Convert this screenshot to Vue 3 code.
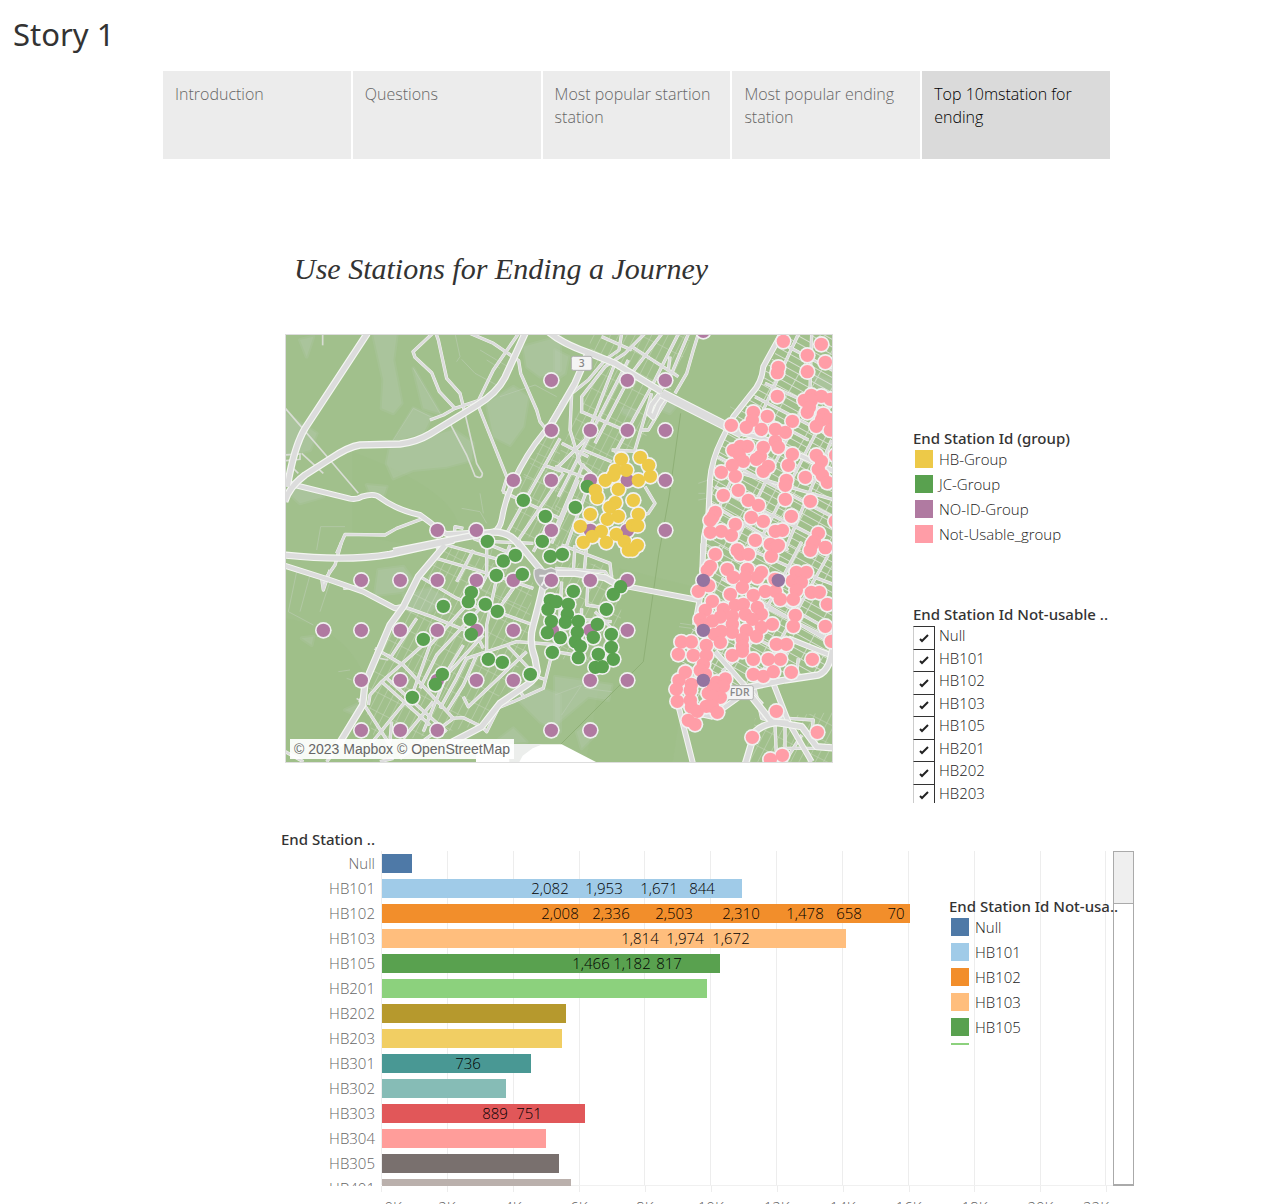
<script setup>
const tabs = [
  'Introduction',
  'Questions',
  'Most popular startion station',
  'Most popular ending station',
  'Top 10mstation for ending',
]

const groups = [
  { name: 'HB-Group', color: '#edc948' },
  { name: 'JC-Group', color: '#59a14f' },
  { name: 'NO-ID-Group', color: '#b07aa1' },
  { name: 'Not-Usable_group', color: '#ff9da7' },
]

const filterIds = ['Null', 'HB101', 'HB102', 'HB103', 'HB105', 'HB201', 'HB202', 'HB203']

// Bar lengths and label centres, in units of the plot's full span
const SPAN = 731
const pct = (n) => (n / SPAN) * 100 + '%'
const bars = [
  { id: 'Null', len: 30, color: '#4e79a7', marks: [] },
  { id: 'HB101', len: 360, color: '#a0cbe8', marks: [['2,082', 168], ['1,953', 222], ['1,671', 277], ['844', 320]] },
  { id: 'HB102', len: 528, color: '#f28e2b', marks: [['2,008', 178], ['2,336', 229], ['2,503', 292], ['2,310', 359], ['1,478', 423], ['658', 467], ['70', 514]] },
  { id: 'HB103', len: 464, color: '#ffbe7d', marks: [['1,814', 258], ['1,974', 303], ['1,672', 349]] },
  { id: 'HB105', len: 338, color: '#59a14f', marks: [['1,466', 209], ['1,182', 250], ['817', 287]] },
  { id: 'HB201', len: 325, color: '#8cd17d', marks: [] },
  { id: 'HB202', len: 184, color: '#b6992d', marks: [] },
  { id: 'HB203', len: 180, color: '#f1ce63', marks: [] },
  { id: 'HB301', len: 149, color: '#499894', marks: [['736', 86]] },
  { id: 'HB302', len: 124, color: '#86bcb6', marks: [] },
  { id: 'HB303', len: 203, color: '#e15759', marks: [['889', 113], ['751', 147]] },
  { id: 'HB304', len: 164, color: '#ff9d9a', marks: [] },
  { id: 'HB305', len: 177, color: '#79706e', marks: [] },
  { id: 'HB401', len: 189, color: '#bab0ac', marks: [] },
]
const ticks = Array.from({ length: 12 }, (_, i) => ({
  at: i * 65.85,
  text: i * 2 + 'K',
  label: i === 0 ? 12 : i === 11 ? 714 : i * 65.85,
}))
const chartLegend = bars.slice(0, 6)

// Map tiles: each has its own origin, with roads and streets in tile units
const tiles = [
  {
    x: -18, y: -15,
    parks: [
      'M280 15 L350 15 L340 90 L365 220 L340 250 L305 235 L310 150 Z',
      'M330 350 L520 300 L580 340 L575 390 L500 410 L400 420 L340 445 L320 400 Z',
      'M400 235 L455 260 L430 310 L340 335 Z',
      'M400 115 L480 250 L430 235 Z',
      'M620 220 L700 170 L745 200 L730 290 L690 345 L640 320 Z',
      'M730 50 L840 20 L840 120 L780 140 L740 110 Z',
      'M16 250 L110 310 L90 360 L16 380 Z',
      'M60 30 L100 20 L80 80 Z',
      'M16 480 L80 470 L130 500 L60 520 Z',
      'M260 465 L320 470 L310 500 L270 490 Z',
    ],
    major: [
      'M262 10 L75 295 Q42 350 22 470',
      'M14 515 Q28 470 75 435 L150 387 Q205 350 240 345 L360 342 Q410 336 450 312 L590 226 Q650 190 675 142 L737 6',
      'M340 664 L550 622 L640 606 Q700 606 725 660',
    ],
    medium: [
      'M16 458 L210 506 Q230 510 245 500 Q285 488 300 503 Q350 540 420 555 Q450 575 480 603 L500 612 L640 606',
      'M850 215 Q830 262 790 310 Q740 370 700 455 Q675 510 666 565 Q660 598 640 606',
    ],
    minor: [
      'M458 10 L399 65 L405 82 L455 128 L478 185 L525 235',
      'M468 10 L475 30 L500 145 L540 190 L555 250',
      'M570 10 L640 40 L716 92 L722 130 L770 240 L780 275 L800 300',
      'M716 10 L640 120 L595 212 L525 235 L490 255 L450 270',
      'M595 228 L682 445', 'M170 670 L195 613 L315 615 L350 595 L430 565',
      'M668 485 L710 505 L850 570', 'M840 325 L680 610', 'M850 430 L715 630',
      'M680 445 L668 485', 'M520 640 L525 590 L550 595', 'M470 660 L500 630',
      'M580 625 L680 665', 'M790 405 L850 425', 'M640 635 L760 640', 'M800 590 L760 665',
    ],
    lane: [
      'M555 250 L590 400 L607 430 Q607 450 585 438 L560 375 L510 280',
      'M16 235 L150 390 L235 490', 'M128 10 L128 46',
      'M16 375 L60 372 L60 388 L16 392', 'M65 370 L130 430', 'M30 405 L55 430',
    ],
    thin: [
      'M400 115 L480 250',
      'M340 330 L400 235 L455 262', 'M525 10 L540 80 L530 95', 'M545 88 L585 130 L650 165',
      'M660 200 L765 165 L830 200', 'M600 60 L700 120 M620 90 L660 115',
      'M110 660 L122 590 L195 590', 'M545 535 L600 545 L620 580', 'M600 490 L610 550',
      'M730 440 L840 480 M750 400 L840 445 M770 370 L840 400',
    ],
    blocks: ['M840 225 L740 400 L690 600 L840 660 Z'],
    blocksW: [],
  },
  {
    x: 807, y: -15,
    parks: [
      'M200 235 L245 240 L235 265 L205 250 Z', 'M330 215 L370 220 L345 250 L320 240 Z',
      'M770 130 L834 150 L834 200 L790 175 Z', 'M0 60 L40 80 L30 130 L0 150 Z',
    ],
    major: [
      'M-20 5 Q20 40 100 68 L180 100 L320 185',
      'M100 68 L60 160 L-10 280',
    ],
    bridge: ['M320 190 L560 312'],
    medium: [
      'M680 10 L625 110 Q620 160 590 190 L535 260 L500 330 Q470 390 465 450 L460 560 L447 620 L445 670',
      'M540 305 L625 325 L850 430', 'M320 185 L290 225 L282 250 L295 262 L310 225 L335 190',
    ],
    minor: [
      'M200 10 L192 60 L150 90 L100 150 L50 190 L45 300 L75 400 L110 430',
      'M270 10 L210 70 L150 110 L80 200 L80 250', 'M400 12 L350 130 L310 190',
      'M430 12 L415 60 L395 130 L360 190', 'M320 12 L230 130 L120 340', 'M370 12 L300 150 L180 370',
      'M180 100 L90 330 L0 420', 'M220 90 L10 500', 'M230 50 L370 140', 'M140 20 L230 60',
      'M345 80 L340 120', 'M290 190 L240 360', 'M255 300 L280 300 L340 200', 'M80 245 L230 310',
      'M85 360 L170 395', 'M170 360 L260 365', 'M0 410 L110 450', 'M110 440 L30 660', 'M85 400 L0 600',
      'M70 450 L-10 640', 'M270 470 L300 520 L280 550 L250 560', 'M20 340 L100 380',
      'M770 12 L765 180', 'M700 50 L850 130', 'M630 160 L850 260', 'M600 200 L850 330', 'M590 240 L760 330',
      'M730 12 L560 380 L480 560', 'M840 200 L600 660', 'M830 330 L690 660', 'M760 200 L540 640',
      'M490 380 L850 570', 'M480 470 L840 650', 'M465 520 L700 660', 'M560 430 L840 510',
    ],
    lane: [], thin: ['M430 460 L460 450 M430 490 L450 490 M430 510 L455 505', 'M525 230 L560 250'],
    blocks: ['M100 15 L410 15 L340 200 L250 360 L180 380 L80 660 L0 660 L0 400 L120 130 Z'],
    blocksW: ['M690 15 L840 15 L840 665 L447 665 L465 450 L500 330 L590 200 Z'],
  },
  {
    x: -18, y: 630,
    parks: [
      'M295 75 L370 65 L395 100 L370 140 L285 150 Z', 'M370 150 L450 130 L500 160 L450 200 L390 200 Z',
      'M690 440 L760 420 L840 450 L840 560 L780 530 Z', 'M65 280 L100 275 L95 300 Z',
      'M700 550 L740 590 L640 600 L660 580 Z', 'M195 495 L240 475 L230 510 Z',
    ],
    major: [
      'M14 30 Q200 50 330 28 L520 -14',
      'M495 0 L415 95 L370 185 L330 240 L255 415 L248 480 L175 600',
      'M712 -10 L795 90 Q790 130 760 240 Q745 290 765 340 L772 380 Q770 400 740 420 L660 475 L605 545 L500 600',
    ],
    medium: ['M14 62 L150 105 L250 140 L345 190 L370 185'],
    minor: [
      'M185 -10 L165 60 L130 110', 'M125 100 L130 135 L150 75', 'M190 130 L240 125',
      'M370 185 L455 215 L590 270 L610 310', 'M420 95 L530 160 L620 200', 'M470 40 L640 90 L760 130',
      'M580 15 L530 110', 'M620 -10 L620 90 L600 130', 'M500 0 L680 50', 'M690 0 L650 100 L620 240 L620 320',
      'M560 180 L450 300 L400 440 L270 600', 'M600 190 L470 330 L420 430', 'M285 310 L370 360 L520 520',
      'M410 220 L330 340', 'M440 290 L305 410 L270 450 L265 480', 'M240 460 L330 600',
      'M305 410 L450 540', 'M460 470 L370 580', 'M320 400 L500 560', 'M520 520 L360 640',
      'M700 130 L650 200 L760 240', 'M720 100 L670 170', 'M840 300 L710 290 L560 340 L530 400 L480 490',
      'M590 330 L550 420 L500 500', 'M550 455 L565 485 L740 320', 'M680 300 L770 395 L800 405',
      'M820 310 L790 430 L700 470 L650 490', 'M610 270 L500 390 L430 560', 'M550 300 L470 430',
      'M510 520 L550 518 L605 545', 'M720 440 L735 460', 'M140 650 L160 625', 'M655 490 L620 560 L605 545',
      'M335 530 L330 590', 'M16 620 L70 650', 'M300 650 L340 640',
    ],
    lane: ['M285 320 L330 330 M295 300 L280 340 M300 340 L325 345', 'M230 460 L250 475 M235 470 L260 460'],
    thin: [
      'M50 80 L25 200 L100 240 M90 90 L60 200 M150 110 L120 200', 'M175 380 L210 375 M200 400 L215 405',
      'M620 60 L680 80 M640 0 L620 70', 'M600 130 L740 190',
    ],
    blocks: ['M500 0 L760 100 L740 330 L600 540 L290 600 L250 480 L300 320 L400 130 Z'],
    blocksW: [],
  },
  {
    x: 807, y: 630,
    parks: [
      'M0 395 L170 420 L160 465 L100 455 L0 540 Z', 'M65 560 L100 535 L120 570 L80 610 Z',
    ],
    major: [
      'M-20 85 L60 85 L150 98 L190 120',
      'M470 400 L540 435 L690 405 L790 390 Q830 375 834 290', 'M590 455 L650 530 L740 545 L785 605 L850 610',
      'M570 660 L600 560 Q640 525 700 535',
    ],
    bridge: [],
    medium: [
      'M220 125 L430 165', 'M445 -5 L440 130 L420 240', 'M372 490 L415 660', 'M400 500 L470 515 L560 450',
      'M655 415 L700 530 L770 650', 'M700 280 L850 340', 'M480 320 L620 480',
    ],
    minor: [
      'M0 70 L150 80 L170 110', 'M60 0 L55 80 M95 0 L85 110 M20 0 L165 55 L170 100', 'M100 90 L95 180 L160 190',
      'M20 110 L10 300', 'M80 190 L75 330', 'M120 200 L180 260', 'M0 320 L60 330', 'M40 220 L170 230',
      'M840 120 L760 90 L600 20', 'M740 -10 L560 330', 'M820 30 L600 420', 'M690 180 L850 270',
      'M640 190 L820 280', 'M500 100 L840 300', 'M450 200 L700 330', 'M600 280 L560 330 L500 380',
      'M730 340 L725 380', 'M600 430 L620 520 L690 540', 'M660 540 L665 650', 'M690 540 L690 650',
      'M700 520 L775 525 L770 560', 'M620 510 L700 520', 'M690 610 L800 610', 'M740 570 L690 650',
    ],
    lane: [], thin: ['M0 450 L80 420 L20 510 M90 430 L170 440', 'M375 235 L410 240 M372 245 L410 250'],
    blocks: ['M0 50 L170 60 L200 200 L180 360 L0 340 Z', 'M600 520 L850 500 L850 660 L580 660 Z'],
    blocksW: ['M447 0 L850 0 L850 300 L800 380 L540 430 L470 520 L370 490 L360 400 L430 200 Z'],
  },
]

// Station marks in the same four tiles, [x, y] per mark
const stations = [
  { color: '#b07aa1', at: [
    [[814, 151], [814, 301], [700, 451], [814, 451], [472, 601], [589, 601], [814, 601]],
    [[445, 4], [217, 151], [331, 151], [106, 301], [217, 301], [331, 301], [106, 451], [217, 451], [331, 451], [106, 601], [217, 601], [331, 601]],
    [[244, 106], [361, 106], [472, 106], [589, 106], [700, 106], [814, 106], [130, 256], [244, 256], [361, 256], [472, 256], [589, 256], [700, 256], [817, 256],
      [244, 406], [361, 406], [472, 406], [589, 406], [700, 406], [244, 556], [361, 556], [472, 556], [814, 556]],
    [[106, 106], [217, 106], [106, 256], [217, 256], [106, 406], [217, 406], [106, 556]],
  ] },
  { color: '#59a14f', at: [
    [[730, 511], [796, 559], [787, 634], [622, 634]],
    [[97, 469], [61, 532]],
    [[670, 48], [706, 31], [649, 91], [727, 88], [811, 34], [574, 142], [565, 170], [616, 178], [652, 199], [490, 184], [571, 223], [574, 268], [430, 283],
      [625, 343], [667, 352], [751, 388], [487, 388], [466, 418], [397, 457], [811, 166], [804, 193], [814, 229], [802, 263], [817, 322]],
    [[22, 28], [197, 125], [175, 148], [55, 139], [154, 193], [4, 170], [40, 178], [37, 208], [31, 232], [70, 229], [127, 238], [67, 262], [16, 278],
      [115, 277], [169, 268], [61, 290], [76, 304], [70, 338], [169, 307], [130, 328], [175, 343], [121, 367], [142, 365]],
  ] },
  { color: '#edc948', at: [
    [],
    [[199, 388], [256, 382], [281, 406], [286, 439], [214, 421], [182, 421], [176, 436], [151, 451], [250, 451], [190, 478], [121, 481], [127, 503],
      [235, 511], [181, 518], [165, 532], [106, 553], [190, 559], [157, 568], [250, 553], [76, 589], [232, 586], [248, 587], [139, 604], [184, 613],
      [112, 619], [85, 637], [154, 637], [208, 634], [220, 660], [247, 646], [232, 660]],
    [],
    [],
  ] },
  { color: '#ff9da7', at: [
    [],
    [[685, 34], [799, 43], [757, 76], [811, 97], [757, 125], [670, 112], [667, 128], [667, 199], [769, 196], [748, 211], [799, 199], [826, 208], [769, 211],
      [757, 247], [763, 232], [595, 247], [592, 271], [637, 259], [574, 292], [712, 274], [529, 286], [619, 298], [661, 298], [691, 307], [805, 253],
      [784, 289], [799, 270], [822, 268], [826, 300], [661, 334], [670, 352], [625, 352], [577, 349], [556, 349], [535, 361], [553, 375], [565, 394],
      [616, 379], [604, 388], [712, 373], [640, 409], [625, 424], [700, 406], [784, 376], [799, 394], [790, 418], [802, 436], [817, 457], [532, 406],
      [541, 439], [499, 427], [751, 442], [694, 451], [691, 466], [550, 481], [505, 496], [580, 511], [610, 526], [691, 508], [766, 514], [481, 547],
      [474, 560], [466, 571], [466, 607], [499, 604], [529, 616], [541, 583], [589, 562], [625, 574], [709, 559], [661, 604], [682, 601], [790, 610],
      [778, 634], [772, 643], [811, 652], [601, 631], [646, 643], [670, 646], [547, 660], [841, 574], [842, 376]],
    [],
    [[481, 28], [466, 64], [457, 76], [547, 16], [556, 28], [580, 28], [649, 34], [667, 4], [766, 16], [811, 8], [517, 73], [535, 97], [577, 73],
      [571, 97], [619, 82], [607, 97], [660, 103], [562, 127], [461, 122], [430, 139], [526, 148], [595, 151], [631, 139], [661, 139], [676, 163],
      [724, 82], [754, 82], [712, 108], [739, 112], [724, 136], [715, 163], [769, 142], [793, 142], [817, 178], [472, 169], [451, 196], [505, 193],
      [541, 181], [565, 178], [607, 187], [619, 208], [496, 216], [436, 223], [532, 214], [571, 208], [592, 223], [472, 228], [532, 238], [721, 211],
      [715, 244], [811, 244], [652, 238], [619, 247], [604, 274], [574, 256], [532, 262], [499, 259], [478, 268], [496, 292], [562, 283], [562, 304],
      [562, 319], [532, 331], [445, 241], [379, 291], [409, 291], [370, 328], [415, 331], [454, 301], [454, 331], [445, 358], [436, 376], [391, 382],
      [372, 406], [364, 433], [367, 469], [409, 418], [406, 436], [406, 466], [409, 486], [427, 499], [451, 388], [484, 412], [511, 402], [505, 424],
      [460, 445], [475, 430], [496, 457], [472, 454], [454, 484], [472, 484], [487, 502], [400, 526], [420, 538], [595, 343], [640, 343], [676, 343],
      [772, 343], [664, 298], [694, 298], [595, 388], [625, 394], [655, 380], [709, 382], [664, 499], [787, 562], [592, 577], [646, 643], [682, 631],
      [829, 289]],
  ] },
  { color: '#9474a0', at: [[], [], [], [[445, 106], [670, 106], [445, 256], [445, 406]]] },
]
const marks = stations.flatMap((s) =>
  s.at.flatMap((list, t) => list.map(([x, y]) => ({ x: x + tiles[t].x, y: y + tiles[t].y, color: s.color })))
)
const streetKinds = ['minor', 'medium', 'major', 'bridge']
</script>

<template>
  <main class="story">
    <h1>Story 1</h1>
    <nav class="tabs" aria-label="Story points">
      <button v-for="(t, i) in tabs" :key="t" type="button" :class="{ active: i === 4 }">{{ t }}</button>
    </nav>

    <section class="board">
      <h2>Use Stations for Ending a Journey</h2>

      <div class="upper">
        <div class="map">
          <svg viewBox="0 0 1638 1281" role="img" aria-label="Map of end stations">
            <defs>
              <pattern id="blocksNj" width="22" height="52" patternUnits="userSpaceOnUse" patternTransform="rotate(27)">
                <path d="M0 0H22M0 0V52" class="grid-line" />
              </pattern>
              <pattern id="blocksNy" width="54" height="20" patternUnits="userSpaceOnUse" patternTransform="rotate(29)">
                <path d="M0 0H54M0 0V20" class="grid-line strong" />
              </pattern>
            </defs>
            <rect width="1638" height="1281" fill="#a1c08c" />
            <path d="M0 850 Q300 900 260 1281 H0Z M200 350 Q600 500 500 650 L200 600Z M1000 700 L1240 760 L1160 1281 H900Z" fill="#9cbd86" opacity="0.3" />
            <g v-for="(t, i) in tiles" :key="'a' + i" :transform="`translate(${t.x} ${t.y})`">
              <path v-for="d in t.parks" :key="d" :d="d" class="park" />
              <path v-for="d in t.blocks" :key="d" :d="d" fill="url(#blocksNj)" />
              <path v-for="d in t.blocksW" :key="d" :d="d" fill="url(#blocksNy)" />
              <path v-for="d in t.thin" :key="d" :d="d" class="thin" />
              <path v-for="d in t.lane" :key="d" :d="d" class="lane" />
            </g>
            <path d="M1184 235 L1150 480 L1118 660 L1072 980 L822 1230" class="border-line" />
            <template v-for="k in streetKinds" :key="k">
              <g v-for="(t, i) in tiles" :key="'c' + i" :transform="`translate(${t.x} ${t.y})`">
                <path v-for="d in t[k]" :key="d" :d="d" :class="['road', 'casing', k]" />
              </g>
              <g v-for="(t, i) in tiles" :key="'r' + i" :transform="`translate(${t.x} ${t.y})`">
                <path v-for="d in t[k]" :key="d" :d="d" :class="['road', k]" />
              </g>
            </template>
            <path d="M570 1228 H827 L930 1281 H570Z" fill="#fff" />
            <path d="M670 1228 H770 L740 1240 L710 1262 L700 1281 H670Z" fill="#eceeec" />
            <g class="shield">
              <rect x="856" y="64" width="62" height="42" rx="6" />
              <text x="887" y="97">3</text>
              <rect x="1321" y="1052" width="81" height="42" rx="6" />
              <text x="1361" y="1084">FDR</text>
            </g>
            <path d="M745 704 L760 698 L777 704 L795 698 L810 704 Q818 740 777 766 Q738 740 745 704Z" fill="#b5b5b5" stroke="#e6e6e6" stroke-width="4" />
            <path d="M760 722 H784 L766 752" fill="none" stroke="#eee" stroke-width="6" />
            <circle v-for="(m, i) in marks" :key="'h' + i" :cx="m.x" :cy="m.y" r="25" fill="#f0f0f0" />
            <circle v-for="(m, i) in marks" :key="'m' + i" :cx="m.x" :cy="m.y" r="20" :fill="m.color" />
          </svg>
          <p class="credit">© 2023 Mapbox © OpenStreetMap</p>
        </div>

        <aside class="side">
          <h3>End Station Id (group)</h3>
          <ul class="legend">
            <li v-for="g in groups" :key="g.name"><i :style="{ background: g.color }"></i>{{ g.name }}</li>
          </ul>
          <h3 class="second">End Station Id Not-usable ..</h3>
          <div class="filter">
            <div class="options">
              <label v-for="id in filterIds" :key="id">
                <span class="tick">
                  <input type="checkbox" checked />
                  <svg viewBox="0 0 10 10" aria-hidden="true"><path d="M1 6 L3 8 L5 6 L9 2" /></svg>
                </span>
                {{ id }}
              </label>
            </div>
          </div>
        </aside>
      </div>

      <div class="chart">
        <h3>End Station ..</h3>
        <div class="body">
          <div class="names">
            <span v-for="b in bars" :key="b.id">{{ b.id }}</span>
          </div>
          <div class="plot">
            <i v-for="t in ticks" :key="t.text" class="rule" :style="{ left: pct(t.at) }"></i>
            <div v-for="b in bars" :key="b.id" class="row">
              <div class="bar" :style="{ width: pct(b.len), background: b.color }"></div>
              <span v-for="m in b.marks" :key="m[0]" :style="{ left: pct(m[1]) }">{{ m[0] }}</span>
            </div>
          </div>
          <div class="scroll"><div class="thumb"></div></div>
          <div class="bar-legend">
            <h3>End Station Id Not-usa..</h3>
            <ul class="legend">
              <li v-for="b in chartLegend" :key="b.id"><i :style="{ background: b.color }"></i>{{ b.id }}</li>
            </ul>
          </div>
        </div>
        <div class="axis">
          <template v-for="t in ticks" :key="t.text">
            <i class="rule" :style="{ left: pct(t.at) }"></i>
            <span :style="{ left: pct(t.label) }">{{ t.text }}</span>
          </template>
        </div>
      </div>
    </section>
  </main>
</template>

<style>
body {
  margin: 0;
  background: #fff;
}
</style>

<style scoped>
* {
  box-sizing: border-box;
}
.story {
  font-family: "Open Sans", "Noto Sans", sans-serif;
  font-weight: 300;
  font-size: 15px;
  color: #222;
}
h1, h2, h3, p, ul {
  margin: 0;
  padding: 0;
}
h1 {
  padding: 12px 13px 15px;
  font-family: "Noto Sans", sans-serif;
  font-size: 31px;
  line-height: 44px;
  font-weight: 400;
  color: #333;
}
.tabs {
  display: grid;
  grid-template-columns: repeat(5, 1fr);
  gap: 2px;
  height: 88px;
  margin: 0 159px 0 163px;
}
.tabs button {
  display: flex;
  align-items: flex-start;
  border: 0;
  padding: 12px;
  background: #ececec;
  color: #666;
  font: inherit;
  font-size: 16px;
  line-height: 23px;
  text-align: left;
}
.tabs .active {
  background: #dadada;
  color: #000;
}
.board {
  margin: 0 135px 0 281px;
}
h2 {
  padding: 90px 13px 45px;
  font: italic 400 30px/40px "Liberation Serif", serif;
  color: #333;
}
.upper {
  display: flex;
  gap: 80px;
  padding-left: 4px;
}
.map {
  position: relative;
  flex: 1;
  align-self: flex-start;
  border: 1px solid #ddd;
}
.map svg {
  display: block;
  width: 100%;
}
.credit {
  position: absolute;
  left: 4px;
  bottom: 3px;
  padding: 0 4px;
  background: rgba(255, 255, 255, 0.93);
  font: 400 14px/20px "Liberation Sans", sans-serif;
  color: #666;
}
.park { fill: #b9ccb4; opacity: 0.4; stroke: #b9ccb4; stroke-width: 12; stroke-linejoin: round; stroke-opacity: 0.5; }
.grid-line { fill: none; stroke: #d9e0d3; stroke-width: 3; opacity: 0.65; }
.grid-line.strong { stroke: #e2e5df; stroke-width: 5; opacity: 0.85; }
.thin { fill: none; stroke: #b9ccb0; stroke-width: 2; }
.lane { fill: none; stroke: #d8ddd4; stroke-width: 5; }
.border-line { fill: none; stroke: #8fb077; stroke-width: 3; }
.road { fill: none; stroke: #dcdcdc; stroke-linejoin: round; }
.minor { stroke-width: 7; }
.medium { stroke-width: 12; }
.major { stroke-width: 15; }
.bridge { stroke-width: 23; }
.casing { stroke: #f4f6f2; }
.casing.minor { stroke-width: 10; }
.casing.medium { stroke-width: 18; }
.casing.major { stroke-width: 22; }
.casing.bridge { stroke-width: 29; }
.shield rect { fill: #f4f4f4; stroke: #b0b0b0; stroke-width: 3; }
.shield text { font: 600 31px "Open Sans", sans-serif; fill: #888; text-anchor: middle; }
h3 {
  font-family: "Noto Sans", sans-serif;
  font-size: 15px;
  line-height: 24px;
  font-weight: 500;
  color: #333;
  white-space: nowrap;
}
.side {
  width: 221px;
  padding-top: 92px;
}
.legend {
  list-style: none;
}
.legend li {
  display: flex;
  gap: 6px;
  height: 25px;
  padding-left: 2px;
  line-height: 18px;
}
.legend i {
  width: 18px;
  height: 18px;
}
.second {
  margin-top: 52px;
}
.filter {
  height: 177px;
  overflow: hidden;
}
.options {
  display: grid;
  grid-template-rows: repeat(8, 1fr);
  height: 180px;
}
.filter label {
  display: flex;
  gap: 4px;
  line-height: 18px;
}
.tick {
  display: grid;
  place-items: center;
  width: 22px;
  border: 1px solid #333;
  border-width: 1px 1px 0;
  border-left-color: #ccc;
}
.tick input, .tick svg {
  grid-area: 1 / 1;
}
.tick input {
  appearance: none;
  width: 20px;
  height: 20px;
  margin: 0;
}
.tick svg {
  width: 10px;
  height: 10px;
}
.tick path {
  fill: none;
  stroke: #222;
  stroke-width: 2;
}
.chart {
  padding-top: 24px;
}
.body {
  position: relative;
  display: flex;
  height: 335px;
  overflow: hidden;
}
.names {
  width: 101px;
  padding-right: 7px;
  text-align: right;
  color: #666;
}
.names span {
  display: block;
  line-height: 25px;
}
.plot {
  position: relative;
  flex: 1;
  border-bottom: 1px solid #f0f0f0;
}
.rule {
  position: absolute;
  top: 0;
  bottom: 0;
  width: 1px;
  margin-left: -1px;
  background: #ededed;
}
.row {
  position: relative;
  height: 25px;
  padding-top: 3px;
}
.bar {
  height: 19px;
}
.row span {
  position: absolute;
  top: 0;
  line-height: 25px;
  transform: translateX(-50%);
  color: #000;
}
.scroll {
  width: 21px;
  border: 1px solid #aaa;
  border-bottom-width: 2px;
}
.thumb {
  height: 52px;
  background: #efefef;
  border-bottom: 1px solid #aaa;
}
.bar-legend {
  position: absolute;
  right: 0;
  top: 43px;
  width: 185px;
  height: 151px;
  overflow: hidden;
}
.axis {
  position: relative;
  height: 19px;
  margin: 0 21px 0 100px;
  padding-left: 1px;
  overflow: hidden;
  color: #666;
}
.axis .rule {
  bottom: 13px;
  margin-left: 0;
}
.axis span {
  position: absolute;
  top: 11px;
  line-height: 20px;
  transform: translateX(-50%);
}
</style>
